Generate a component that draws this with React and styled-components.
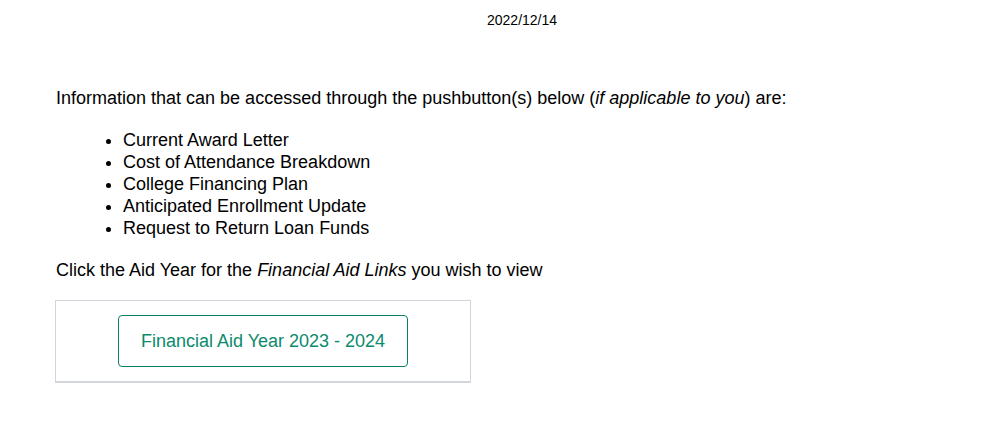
import React from 'react';
import styled, { createGlobalStyle } from 'styled-components';

const GlobalStyle = createGlobalStyle`
  body {
    margin: 0;
    background: #fff;
    font-family: 'Liberation Sans', Arial, sans-serif;
    color: #000;
  }
`;

const Page = styled.div`
  padding: 0 0 40px 56px;
`;

const DateLine = styled.div`
  font-size: 14px;
  line-height: 16px;
  padding: 12px 0 0 431px;
`;

const Intro = styled.p`
  font-size: 18px;
  line-height: 22px;
  margin: 59px 0 0;
`;

const List = styled.ul`
  margin: 20px 0 0;
  padding-left: 67px;
  font-size: 18px;
  line-height: 22px;
`;

const Prompt = styled.p`
  font-size: 18px;
  line-height: 22px;
  margin: 20px 0 0;
`;

const LinkBox = styled.div`
  width: 416px;
  margin: 19px 0 0 -1px;
  padding: 14px 0 14px 62px;
  box-sizing: border-box;
  border: 1px solid #d2d6dc;
  border-bottom-width: 2px;
`;

const YearButton = styled.button`
  width: 290px;
  height: 52px;
  background: #fff;
  border: 1px solid #0b7f66;
  border-radius: 4px;
  color: #0b8a6c;
  font-family: 'Liberation Sans', Arial, sans-serif;
  font-size: 18px;
  cursor: pointer;
`;

const items = [
  'Current Award Letter',
  'Cost of Attendance Breakdown',
  'College Financing Plan',
  'Anticipated Enrollment Update',
  'Request to Return Loan Funds',
];

function App() {
  return (
    <>
      <GlobalStyle />
      <Page>
        <DateLine>2022/12/14</DateLine>
        <Intro>
          Information that can be accessed through the pushbutton(s) below (<i>if applicable to you</i>) are:
        </Intro>
        <List>
          {items.map((item) => (
            <li key={item}>{item}</li>
          ))}
        </List>
        <Prompt>
          Click the Aid Year for the <i>Financial Aid Links</i> you wish to view
        </Prompt>
        <LinkBox>
          <YearButton>Financial Aid Year 2023 - 2024</YearButton>
        </LinkBox>
      </Page>
    </>
  );
}

export default App;
